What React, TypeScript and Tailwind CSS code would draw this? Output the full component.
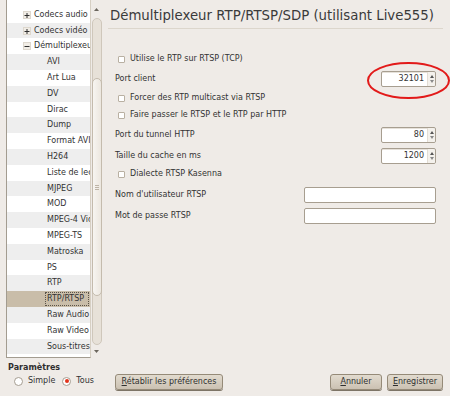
import React from "react";

type Row = { label: string; level: 0 | 1; exp?: "+" | "-" };

const rows: Row[] = [
  { label: "Codecs audio", level: 0, exp: "+" },
  { label: "Codecs vidéo", level: 0, exp: "+" },
  { label: "Démultiplexeurs", level: 0, exp: "-" },
  { label: "AVI", level: 1 },
  { label: "Art Lua", level: 1 },
  { label: "DV", level: 1 },
  { label: "Dirac", level: 1 },
  { label: "Dump", level: 1 },
  { label: "Format AVI", level: 1 },
  { label: "H264", level: 1 },
  { label: "Liste de lecture", level: 1 },
  { label: "MJPEG", level: 1 },
  { label: "MOD", level: 1 },
  { label: "MPEG-4 Vidéo", level: 1 },
  { label: "MPEG-TS", level: 1 },
  { label: "Matroska", level: 1 },
  { label: "PS", level: 1 },
  { label: "RTP", level: 1 },
  { label: "RTP/RTSP", level: 1 },
  { label: "Raw Audio", level: 1 },
  { label: "Raw Video", level: 1 },
  { label: "Sous-titres", level: 1 },
];

function Expander({ open }: { open: boolean }) {
  return (
    <svg width="8" height="8" viewBox="0 0 8 8" className="shrink-0">
      <rect x="0.5" y="0.5" width="7" height="7" fill="#f1ede6" stroke="#ddd7cd" />
      <path d="M1.5 4.5h5" stroke="#2e2e2e" strokeWidth="1" />
      {!open && <path d="M4 2v5" stroke="#2e2e2e" strokeWidth="1" />}
    </svg>
  );
}

function Checkbox({ label }: { label: string }) {
  return (
    <div className="h-full flex items-center pl-[3px] gap-[5px]">
      <div className="w-[7px] h-[7px] bg-white border border-[#b9b0a2] rounded-[1px] shrink-0" />
      <span>{label}</span>
    </div>
  );
}

function Spin({ value }: { value: string }) {
  return (
    <div className="w-[55px] h-[16px] bg-white border border-[#a79e90] rounded-[2px] flex shadow-[inset_0_1px_0_#e6e1da]">
      <div className="flex-1 text-right pr-[3px] leading-[14px]">{value}</div>
      <div className="w-[8px] flex flex-col items-center justify-center gap-[2px] bg-[#f4f1ec] border-l border-[#e3ddd4] rounded-r-[2px]">
        <svg width="4" height="3" viewBox="0 0 4 3"><path d="M0 3L2 0L4 3Z" fill="#555" /></svg>
        <svg width="4" height="3" viewBox="0 0 4 3"><path d="M0 0L2 3L4 0Z" fill="#888" /></svg>
      </div>
    </div>
  );
}

function TextBox() {
  return <div className="w-[132px] h-[16px] bg-white border border-[#a79e90] rounded-[2px]" />;
}

function Btn({ first, rest, w }: { first: string; rest: string; w: string }) {
  return (
    <div
      className={`${w} h-[16px] rounded-[3px] border border-[#958a78] bg-gradient-to-b from-[#e2dbcf] to-[#cbc1b2] shadow-[0_1px_0_#7d7466] flex items-center justify-center leading-[14px] text-[#2f2f2f]`}
    >
      <span>
        <span className="underline">{first}</span>
        {rest}
      </span>
    </div>
  );
}

function Radio({ checked }: { checked: boolean }) {
  return (
    <div className="w-[9px] h-[9px] rounded-full border border-[#a59d91] bg-white flex items-center justify-center shrink-0">
      {checked && <div className="w-[4px] h-[4px] rounded-full bg-[#e2341c]" />}
    </div>
  );
}

export default function App() {
  return (
    <div className="relative w-[450px] h-[396px] overflow-hidden bg-[#efebe7] flex text-[8px] text-[#333] font-['DejaVu_Sans',sans-serif]">
      {/* Left column */}
      <div className="w-[102px] flex flex-col">
        <div className="h-[358px] flex">
          <div className="ml-[6px] w-[85px] border-l border-b border-r border-l-[#a39c90] border-b-[#a39c90] border-r-[#d6cfc3] bg-white overflow-hidden pt-[6.9px]">
            {rows.map((r, i) => {
              const sel = i === 18;
              const bg = sel ? "bg-[#c9bda9]" : i % 2 === 1 ? "bg-[#eeeeee]" : "bg-white";
              return (
                <div
                  key={r.label}
                  className={`h-[15.8px] flex items-center whitespace-nowrap overflow-hidden ${bg} ${r.level === 0 ? "pl-[16px] gap-[3px]" : "pl-[38px]"}`}
                >
                  {r.exp && <Expander open={r.exp === "-"} />}
                  {sel ? (
                    <span className="h-[14px] leading-[12px] px-[1px] w-[44px] border border-dotted border-[#5a5348]">{r.label}</span>
                  ) : (
                    <span className={r.level === 1 ? "pl-[2px]" : ""}>{r.label}</span>
                  )}
                </div>
              );
            })}
          </div>
          {/* scrollbar */}
          <div className="w-[11px] flex flex-col items-center">
            <div className="h-[18px] flex items-center justify-center">
              <svg width="5" height="3" viewBox="0 0 5 3"><path d="M0 3L2.5 0L5 3Z" fill="#6b665e" /></svg>
            </div>
            <div className="w-[10px] h-[327px] rounded-full border border-[#cfc7bb] bg-[#e7e1d8] flex flex-col">
              <div className="h-[59px]" />
              <div className="mx-[-1px] h-[218px] rounded-full border border-[#c4bbad] bg-gradient-to-r from-[#f7f5f1] to-[#ece7df] flex flex-col items-center justify-center gap-[1px]">
                <div className="w-[4px] h-px bg-[#bdb4a6]" />
                <div className="w-[4px] h-px bg-[#bdb4a6]" />
                <div className="w-[4px] h-px bg-[#bdb4a6]" />
              </div>
            </div>
            <div className="h-[13px] flex items-center justify-center">
              <svg width="5" height="3" viewBox="0 0 5 3"><path d="M0 0L2.5 3L5 0Z" fill="#6b665e" /></svg>
            </div>
          </div>
        </div>
        <div className="pl-[8px] mt-[4px] h-[12px] flex items-center font-bold text-[#2f2f2f]">Paramètres</div>
        <div className="pl-[14px] h-[14px] flex items-center">
          <Radio checked={false} />
          <span className="ml-[5px]">Simple</span>
          <div className="ml-[7px]"><Radio checked={true} /></div>
          <span className="ml-[5px]">Tous</span>
        </div>
      </div>

      {/* Right column */}
      <div className="flex-1 flex flex-col">
        <div className="ml-[6px] mr-[7px] h-[29px] border-b border-[#dcd6cc] pl-[2px] pt-[8px]">
          <div className="text-[13.3px] leading-[16px] text-[#3a3a3a]">Démultiplexeur RTP/RTSP/SDP (utilisant Live555)</div>
        </div>
        <div className="pl-[13px] pr-[14px] flex flex-col">
          <div className="h-[16px] mt-[22px]"><Checkbox label="Utilise le RTP sur RTSP (TCP)" /></div>
          <div className="h-[16px] mt-[4px] flex items-center justify-between">
            <span>Port client</span>
            <Spin value="32101" />
          </div>
          <div className="h-[16px] mt-[3px]"><Checkbox label="Forcer des RTP multicast via RTSP" /></div>
          <div className="h-[16px] mt-[1px]"><Checkbox label="Faire passer le RTSP et le RTP par HTTP" /></div>
          <div className="h-[16px] mt-[4px] flex items-center justify-between">
            <span>Port du tunnel HTTP</span>
            <Spin value="80" />
          </div>
          <div className="h-[16px] mt-[5px] flex items-center justify-between">
            <span>Taille du cache en ms</span>
            <Spin value="1200" />
          </div>
          <div className="h-[16px] mt-[2px]"><Checkbox label="Dialecte RTSP Kasenna" /></div>
          <div className="h-[16px] mt-[5px] flex items-center justify-between">
            <span>Nom d'utilisateur RTSP</span>
            <TextBox />
          </div>
          <div className="h-[16px] mt-[5px] flex items-center justify-between">
            <span>Mot de passe RTSP</span>
            <TextBox />
          </div>
        </div>
        <div className="flex-1" />
        <div className="pl-[13px] pr-[7px] mb-[6px] flex items-center">
          <Btn first="R" rest="établir les préférences" w="w-[108px]" />
          <div className="flex-1" />
          <Btn first="A" rest="nnuler" w="w-[52px]" />
          <div className="w-[5px]" />
          <Btn first="E" rest="nregistrer" w="w-[56px]" />
        </div>
      </div>

      {/* red annotation ellipse */}
      <svg className="absolute left-[366px] top-[60px] pointer-events-none" width="84" height="42" viewBox="0 0 84 42">
        <ellipse cx="42.5" cy="20.5" rx="40.5" ry="17.5" fill="none" stroke="#e21a1a" strokeWidth="2" />
      </svg>
    </div>
  );
}
